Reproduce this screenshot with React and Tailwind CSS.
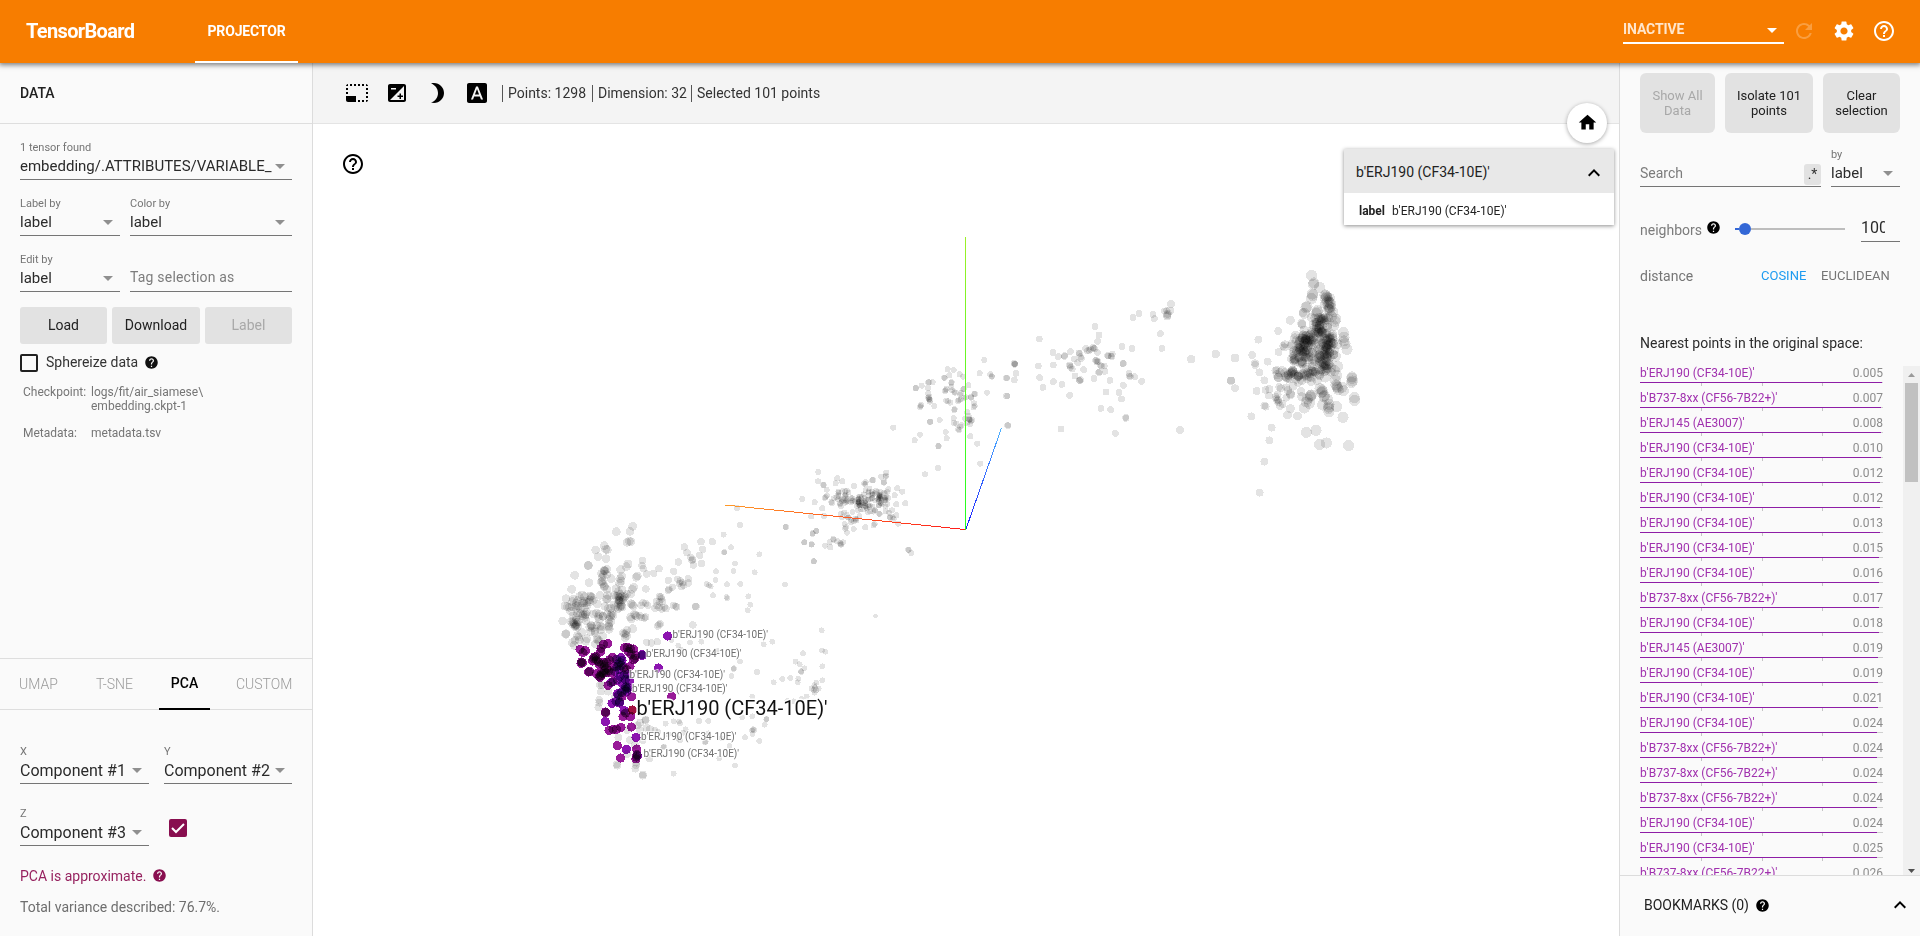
import React from "react";
import {
  MdPhotoSizeSelectSmall,
  MdExposure,
  MdBrightness3,
  MdFontDownload,
  MdHelpOutline,
  MdHelp,
  MdSettings,
  MdRefresh,
  MdHome,
  MdExpandLess,
} from "react-icons/md";

/* ---------- scatter data: flat x,y lists in thirds of a pixel, relative to an origin ---------- */

const LOWER_LEFT = [
  229,95, 278,79, 270,94, 261,127, 268,124, 273,125, 193,137, 167,150, 197,148, 202,149, 174,170, 198,176, 145,196, 145,197,
  104,226, 147,248, 192,211, 194,213, 190,224, 186,232, 187,243, 184,246, 214,236, 193,261, 201,268, 95,268, 264,192, 259,200,
  242,209, 308,182, 306,197, 310,206, 357,206, 341,220, 320,222, 292,228, 289,232, 245,228, 241,236, 243,243, 239,250, 318,267,
  277,268, 281,262, 272,282, 246,270, 228,266, 223,285, 234,288, 240,283, 247,290, 238,292, 229,290, 255,290, 240,300, 243,318,
  240,322, 246,321, 244,316, 234,326, 202,296, 200,298, 203,286, 153,290, 150,288, 155,293, 149,300, 160,301, 126,285, 134,290,
  100,298, 97,305, 113,302, 132,303, 82,320, 88,322, 75,318, 78,296, 121,326, 133,324, 139,308, 114,318, 277,314, 273,311,
  280,318, 309,308, 317,310, 323,316, 303,316, 286,346, 290,349, 283,343, 317,351, 313,354, 305,353, 300,347, 344,325, 350,305,
  359,290, 364,297, 359,306, 368,305, 351,317, 357,322, 373,322, 378,326, 365,327, 363,291, 407,319, 410,321, 400,316, 387,268,
  385,271, 397,262, 466,319, 468,320, 385,241, 413,238, 421,243, 427,248, 425,260, 418,250, 431,255, 445,236, 445,249, 401,214,
  415,186, 433,141, 441,158, 452,172, 456,181, 460,195, 458,178, 479,166, 488,148, 483,125, 517,125, 485,191, 357,374, 353,378,
  361,371, 459,375, 68,363, 78,401, 77,403, 104,374, 102,370, 107,378, 110,373, 98,372, 105,380, 112,366, 108,352, 99,348,
  122,341, 128,348, 137,343, 134,352, 113,340, 138,362, 178,343, 175,350, 177,357, 189,349, 213,345, 219,347, 211,350, 207,358,
  216,339, 154,376, 149,381, 156,384, 165,393, 152,395, 180,378, 184,381, 182,389, 205,378, 207,381, 208,388, 278,386, 261,391,
  258,400, 254,402, 260,407, 255,413, 112,407, 116,411, 118,420, 105,421, 174,420, 171,417, 178,424, 137,424, 103,436, 97,428,
  320,427, 334,429, 352,425, 140,416, 166,432, 188,408, 212,325, 222,315, 195,319, 172,312, 118,290, 140,336, 92,334, 125,397,
];
const LOWER_SPARSE = [
  600,75, 551,104, 573,142, 554,156, 552,158, 585,191, 528,214, 581,213, 644,217, 527,240, 500,252, 507,256, 512,259, 561,253,
  601,252, 519,286, 560,291, 562,295, 625,289, 631,314, 623,331, 658,163, 737,81, 818,102, 829,93, 793,127, 815,134, 822,184,
  735,254, 591,24, 845,391, 671,433, 697,425, 484,425, 450,428, 415,437, 423,449, 395,420, 530,452, 582,505, 581,507, 600,485,
  651,516, 789,460, 767,485, 779,493, 793,505, 783,514, 784,516, 846,452, 856,455, 847,499, 847,541, 829,548, 823,556, 825,562,
  821,570, 828,570, 824,578, 836,566, 815,566, 727,537, 751,534, 775,536, 773,547, 701,547, 637,590, 760,604, 742,603, 785,597,
  800,590, 680,657, 679,658, 674,674, 637,649, 607,652, 639,688, 636,692, 642,690, 638,702, 615,712, 658,723, 569,738, 575,528,
  477,663, 505,663, 520,640, 437,688, 401,664, 417,665, 420,670, 377,671, 316,659, 317,661, 300,668, 330,688, 345,690, 355,695,
  293,676, 320,684, 372,740, 370,742, 420,721, 416,716, 497,725, 495,727, 585,797, 538,775, 401,821, 467,707, 430,698, 505,700,
  545,715, 385,703, 328,775, 309,824, 308,827, 286,806, 288,796, 232,797, 230,793, 289,788, 180,555, 183,575, 178,600, 175,622,
  178,608, 205,575, 235,712, 262,762, 253,640, 270,720, 186,556, 200,640, 225,590, 300,690, 308,720, 262,690, 285,735,
];
const MIDDLE = [
  115,366, 114,394, 67,447, 104,457, 127,475, 94,499, 132,498, 18,531, 109,543, 98,550, 73,577, 95,583, 101,634, 135,587,
  151,592, 149,577, 161,569, 160,567, 172,574, 181,580, 184,583, 189,577, 182,584, 385,599, 394,609, 386,600, 167,400, 172,385,
  187,394, 130,404, 131,406, 140,419, 137,442, 134,444, 141,437, 156,459, 154,456, 319,368, 318,377, 317,380, 304,380, 279,390,
  277,391, 257,397, 252,401, 312,396, 311,398, 325,418, 352,415, 367,425, 344,436, 376,460, 349,463, 349,496, 341,508, 329,501,
  331,503, 299,492, 297,491, 327,488, 336,481, 338,502, 355,521, 284,522, 281,526, 256,532, 229,511, 213,516, 198,532, 196,536,
  201,548, 194,522, 221,537, 222,408, 317,484, 340,233, 404,271, 420,254, 435,373, 474,354, 475,288, 476,289, 500,265, 497,246,
  601,341, 592,281, 571,259, 535,238, 538,240, 541,230, 545,226, 450,216, 451,215, 479,210, 521,205, 522,219, 529,221, 555,206,
  568,209, 570,209, 567,207, 571,222, 577,210, 566,197, 562,187, 562,218, 573,214, 581,172, 584,168, 582,160, 523,180, 524,178,
  511,158, 499,152, 504,154, 463,168, 449,155, 447,148, 445,143, 448,140, 447,147, 450,150, 445,130, 423,165, 422,168, 420,172,
  408,114, 407,115, 425,107, 445,97, 447,97, 458,97, 444,114, 492,83, 494,84, 508,76, 521,60, 503,58, 539,73, 549,80,
  515,97, 514,99, 514,111, 497,121, 495,124, 516,121, 523,126, 526,128, 543,129, 540,134, 550,118, 551,117, 565,106, 553,144,
  558,142, 573,141, 574,143, 583,132, 585,132, 537,151, 534,153, 542,148, 621,128, 682,138, 684,226, 599,70, 613,30, 631,73,
  635,79, 636,80, 680,84, 499,117,
];
const RIGHT_SPARSE = [
  513,72, 510,92, 493,93, 500,92, 503,101, 502,105, 502,109, 459,103, 463,116, 417,101, 399,113, 481,161, 486,205, 574,238,
  647,222, 693,302, 540,450, 346,460, 183,447, 23,437, 20,348, 43,300, 20,294, 48,280, 43,250, 44,253, 118,177, 115,258,
  119,293, 129,322, 159,218, 175,230, 160,255, 160,305, 186,313, 209,346, 193,227, 194,229, 211,215, 223,237, 237,219, 239,221,
  244,236, 242,230, 233,248, 209,255, 212,262, 217,267, 210,258, 225,288, 238,301, 239,302, 242,299, 251,269, 282,296, 285,140,
  297,165, 293,184, 292,217, 257,205, 262,212, 267,212, 279,203, 281,205, 284,206, 272,208, 287,242, 289,241, 294,244, 291,246,
  301,256, 305,258, 313,258, 298,276, 296,278, 315,274, 323,227, 325,228, 337,222, 335,230, 333,228, 366,200, 396,206, 369,250,
  370,251, 387,281, 388,288, 391,290, 404,290, 425,304, 330,301, 370,316, 318,336, 357,338, 365,357, 303,385, 332,389, 377,412,
  378,415,
];
const FAR_RIGHT = [
  275,76, 282,99, 281,103, 299,112, 277,132, 278,137, 275,146, 318,137, 320,141, 315,135, 316,146, 322,156, 328,158, 332,160,
  325,165, 329,172, 326,178, 330,182, 261,170, 258,173, 249,187, 253,190, 211,211, 175,243, 115,269, 97,315, 105,340, 106,345,
  143,335, 118,367, 133,391, 33,392, 45,415, 110,423, 133,467, 137,470, 94,499, 155,533, 148,571, 133,635, 119,728, 232,498,
  203,495, 211,476, 259,547, 288,541, 299,583, 319,579, 386,587, 369,502, 327,486, 326,475, 350,470, 403,443, 404,451, 396,381,
  397,393, 395,397, 396,385, 353,349, 343,361, 370,248, 372,273, 375,281, 381,298, 372,262, 345,214, 340,228, 347,207, 335,200,
  292,186, 289,191, 292,182, 245,220, 246,223, 227,255, 190,288, 193,292, 176,306, 195,283, 166,362, 170,360, 148,417, 137,420,
  147,437, 178,411, 183,415, 173,433, 175,450, 172,452, 170,447, 176,457, 167,441, 188,462, 180,468, 199,412, 211,431, 212,434,
  199,443, 204,421, 243,425, 245,440, 272,437, 271,441, 274,435, 262,447, 259,456, 253,474, 268,460, 306,420, 308,424, 305,428,
  300,416, 312,440, 323,448, 327,463, 308,465, 351,409, 352,413, 348,405, 355,419, 370,422, 350,376, 347,391, 316,381, 366,412,
  313,437, 326,471, 235,397, 219,408, 339,186, 346,319, 351,282,
];

/* x, y, tone: 0 magenta, 1 violet, 2 hovered */
const PICKED = [
  203,431,0, 190,433,0, 183,445,0, 182,455,0, 120,448,0, 136,452,0, 129,458,0, 124,486,0, 123,490,0, 127,488,0, 148,514,0,
  146,516,0, 160,475,0, 163,471,0, 170,480,0, 175,485,0, 158,483,0, 185,492,0, 192,488,0, 178,494,0, 200,487,0, 208,480,0,
  218,472,0, 200,505,0, 193,512,0, 190,520,0, 183,527,0, 178,529,0, 185,519,0, 170,521,0, 206,511,0, 180,532,0, 213,519,0,
  222,500,0, 230,478,1, 243,473,1, 240,487,1, 235,492,1, 244,496,1, 231,500,1, 250,503,0, 238,508,1, 224,514,1, 259,508,0,
  270,499,0, 254,443,0, 262,442,0, 271,446,0, 280,447,0, 266,455,0, 273,463,0, 287,467,0, 284,475,0, 280,479,0, 306,464,1,
  307,466,1, 383,408,1, 355,504,1, 395,590,0, 240,529,1, 252,526,1, 262,522,1, 256,538,1, 268,542,1, 232,540,1, 219,545,0,
  213,548,1, 204,556,0, 248,552,1, 257,561,1, 261,566,1, 255,569,1, 260,574,1, 264,563,1, 245,577,1, 233,581,1, 236,585,1,
  246,590,0, 275,590,0, 228,604,1, 239,606,1, 216,610,1, 238,609,1, 197,638,0, 196,636,0, 196,665,1, 252,631,1, 257,639,0,
  249,650,0, 272,650,0, 274,681,0, 243,682,0, 229,688,0, 219,688,0, 207,691,0, 288,712,1, 232,737,0, 259,748,1, 290,747,0,
  291,763,0, 292,767,1, 289,771,0, 288,777,0, 242,774,0, 277,630,2, 198,519,0, 168,470,0, 246,481,1, 194,498,0,
];

/* dense cores: centre x, centre y, spread x, spread y, count, origin index */
const CORES = [
  [299, 222, 18, 20, 40, 1],
  [322, 268, 14, 14, 22, 1],
  [262, 272, 13, 12, 22, 1],
  [278, 300, 38, 38, 110, 1],
  [320, 316, 14, 13, 14, 1],
  [268, 374, 26, 12, 30, 1],
  [322, 350, 11, 12, 10, 1],
  [230, 305, 14, 22, 18, 1],
  [205, 370, 22, 13, 20, 1],
  [325, 160, 7, 16, 7, 1],
  [236, 453, 14, 8, 24, 0],
  [284, 436, 16, 10, 20, 0],
  [185, 440, 14, 14, 22, 0],
  [308, 450, 10, 13, 18, 0],
  [262, 474, 14, 9, 14, 0],
  [216, 490, 20, 14, 14, 0],
  [245, 445, 50, 26, 26, 0],
  [238, 292, 14, 18, 10, 2],
  [104, 372, 8, 8, 5, 2],
  [190, 230, 9, 20, 6, 2],
  [140, 305, 30, 24, 12, 2],
  [190, 365, 50, 28, 14, 2],
];
const ORIGINS = [
  { x: 780, y: 350, r: 2.9 },
  { x: 1220, y: 250, r: 4.7 },
  { x: 540, y: 500, r: 4.3 },
];

function makeRandom(seed) {
  let a = seed;
  return () => {
    a = (a + 0x6d2b79f5) | 0;
    let t = Math.imul(a ^ (a >>> 15), 1 | a);
    t = (t + Math.imul(t ^ (t >>> 7), 61 | t)) ^ t;
    return ((t ^ (t >>> 14)) >>> 0) / 4294967296;
  };
}

function corePoints() {
  const rnd = makeRandom(41);
  const out = [];
  for (const [cx, cy, sx, sy, n, o] of CORES) {
    const { x, y, r } = ORIGINS[o];
    for (let i = 0; i < n; i++) {
      const a = rnd() * Math.PI * 2;
      const d = Math.min(1.7, Math.sqrt(-2 * Math.log(1 - rnd() * 0.9)));
      out.push([x + (cx + Math.cos(a) * d * sx) / 3, y + (cy + Math.sin(a) * d * sy) / 3, r]);
    }
  }
  return out;
}

function place(list, ox, oy, r) {
  const out = [];
  for (let i = 0; i < list.length; i += 2) {
    const radius = typeof r === "function" ? r(list[i], list[i + 1]) : r;
    out.push([ox + list[i] / 3, oy + list[i + 1] / 3, radius]);
  }
  return out;
}

const GREY = [
  ...place(LOWER_LEFT, 540, 500, (x) => (x < 300 ? 4.4 : 3.7)),
  ...place(LOWER_SPARSE, 540, 500, (x) => (x < 340 ? 3.9 : 2.9)),
  ...place(MIDDLE, 780, 350, 3),
  ...place(RIGHT_SPARSE, 1000, 280, (x) => (x > 500 ? 4.1 : 3.4)),
  ...place(FAR_RIGHT, 1220, 250, (x) => (x < 200 ? 3.9 : x < 250 ? 4.5 : 5.6)),
  [1014.7, 363.7, 3],
  [1015, 364.3, 3],
  [875.5, 616, 2.2],
  [1235, 358, 4.5],
  ...corePoints(),
];

const TONES = ["#981a98", "#8c14b0", "#a01040"];
const NAME = "b'ERJ190 (CF34-10E)'";
const TAGS = [
  [672.5, 638],
  [646, 657],
  [629.5, 678],
  [632, 692],
  [641, 740],
  [643.5, 757],
];

function Scatter() {
  return (
    <svg width="1306" height="812" viewBox="313 124 1306 812" className="block" fontFamily="Roboto, sans-serif">
      <defs>
        <linearGradient id="ax" gradientUnits="userSpaceOnUse" x1="966" y1="529" x2="725" y2="505">
          <stop offset="0" stopColor="#ff1a1a" />
          <stop offset="1" stopColor="#ff9a28" />
        </linearGradient>
        <linearGradient id="ay" gradientUnits="userSpaceOnUse" x1="965" y1="529" x2="965" y2="237">
          <stop offset="0" stopColor="#1fff1f" />
          <stop offset="1" stopColor="#9cf028" />
        </linearGradient>
        <linearGradient id="az" gradientUnits="userSpaceOnUse" x1="966" y1="529" x2="1001" y2="428">
          <stop offset="0" stopColor="#1a1aff" />
          <stop offset="1" stopColor="#4fb4ff" />
        </linearGradient>
      </defs>
      <g fill="#000" fillOpacity="0.11" shapeRendering="crispEdges">
        {GREY.map(([x, y, r], i) => (
          <circle key={i} cx={x} cy={y} r={r} />
        ))}
      </g>
      <g shapeRendering="crispEdges">
        {Array.from({ length: PICKED.length / 3 }, (_, i) => (
          <circle
            key={i}
            cx={540 + PICKED[i * 3] / 3}
            cy={500 + PICKED[i * 3 + 1] / 3}
            r="4.6"
            fill={TONES[PICKED[i * 3 + 2]]}
            className="mix-blend-multiply"
          />
        ))}
      </g>
      <g strokeWidth="1" shapeRendering="crispEdges">
        <line x1="725" y1="505" x2="966" y2="529.6" stroke="url(#ax)" />
        <rect x="965" y="237" width="1" height="293" fill="url(#ay)" />
        <line x1="966" y1="529" x2="1001.5" y2="428" stroke="url(#az)" />
      </g>
      <g fontSize="10" fill="#707070" stroke="#fff" strokeOpacity="0.75" strokeWidth="2" paintOrder="stroke">
        {TAGS.map(([x, y]) => (
          <text key={y} x={x} y={y}>{NAME}</text>
        ))}
      </g>
      <text x="636.5" y="715" fontSize="20" fill="#111" stroke="#fff" strokeWidth="3" paintOrder="stroke">
        {NAME}
      </text>
    </svg>
  );
}

/* ---------- form pieces ---------- */

function Caret({ className = "text-[#8f8f8f]" }) {
  return (
    <svg width="10" height="5" viewBox="0 0 10 5" className={"shrink-0 " + className}>
      <path d="M0 0h10L5 5z" fill="currentColor" />
    </svg>
  );
}

function Field({ label, value, className, size = "text-[15px]" }) {
  return (
    <div className={"h-[41px] border-b border-[#757575] " + className}>
      <div className="h-4 text-[11px] leading-[18px] text-[#757575]">{label}</div>
      <div className="flex h-[23px] items-center pr-[7px]">
        <span className={"min-w-0 flex-1 leading-[23px] whitespace-nowrap text-[#2b2b2b] " + size}>{value}</span>
        <Caret />
      </div>
    </div>
  );
}

function GreyButton({ children, disabled, className }) {
  return (
    <button className={"flex items-center justify-center bg-[#e2e2e2] " + (disabled ? "text-[#a8a8a8] " : "text-[#212121] ") + className}>
      {children}
    </button>
  );
}

function Header() {
  return (
    <header className="relative z-10 flex h-[63px] shrink-0 bg-[#f77d00] text-white shadow-[0_1px_5px_1px_rgba(0,0,0,0.5)]">
      <div className="flex w-[195px] items-center pb-0.5 pl-[26px] text-[20px] font-bold tracking-[-0.65px]">TensorBoard</div>
      <div className="flex w-[103px] items-center justify-center border-b-2 border-white pt-0.5 text-[14px] font-bold tracking-[-0.15px]">PROJECTOR</div>
      <div className="flex-1" />
      <div className="mt-[16px] mr-[8px] flex h-[28px] w-[161px] items-center justify-between border-b-2 border-white pr-[7px] text-[14px] font-bold tracking-[-0.1px]">
        <span className="text-[#ffe6cc]">INACTIVE</span>
        <Caret className="mt-[3px] text-white" />
      </div>
      <div className="flex items-center gap-4 pr-6 pb-px">
        <MdRefresh size={24} className="opacity-25" />
        <MdSettings size={24} />
        <MdHelpOutline size={24} />
      </div>
    </header>
  );
}

function DataPanel() {
  return (
    <aside className="flex w-[313px] shrink-0 flex-col border-r border-[#dcdcdc] bg-[#fafafa]">
      <div className="flex h-[61px] items-center border-b border-[#dedede] pl-5 text-[14px] font-medium text-[#212121]">DATA</div>
      <div className="flex flex-1 flex-col px-5 pt-[15px]">
        <Field label="1 tensor found" value="embedding/.ATTRIBUTES/VARIABLE_" className="w-[272px]" />
        <div className="mt-[15px] flex gap-[10px]">
          <Field label="Label by" value="label" className="w-[100px]" />
          <Field label="Color by" value="label" className="w-[162px]" />
        </div>
        <div className="mt-[15px] flex gap-[10px]">
          <Field label="Edit by" value="label" className="w-[100px]" />
          <div className="flex h-[41px] w-[162px] items-end border-b border-[#757575] pb-[4px] text-[14px] leading-[20px] tracking-[0.2px] text-[#7c7c7c]">Tag selection as</div>
        </div>
        <div className="mt-[15px] flex gap-[5px] text-[14px]">
          <GreyButton className="h-[37px] w-[87px] rounded-[3px]">Load</GreyButton>
          <GreyButton className="h-[37px] w-[88px] rounded-[3px]">Download</GreyButton>
          <GreyButton disabled className="h-[37px] w-[87px] rounded-[3px]">Label</GreyButton>
        </div>
        <div className="mt-[10px] flex h-[18px] items-center">
          <span className="h-[18px] w-[18px] rounded-[2px] border-2 border-[#212121]" />
          <span className="ml-2 pb-px text-[14px] text-[#333]">Sphereize data</span>
          <MdHelp size={15} className="mb-[2px] ml-[6px] text-[#111]" />
        </div>
        <div className="mt-[13px] ml-[3px] grid grid-cols-[68px_1fr] gap-y-[13px] text-[12px] leading-[14px] text-[#757575]">
          <span>Checkpoint:</span>
          <span>logs/fit/air_siamese\<br />embedding.ckpt-1</span>
          <span>Metadata:</span>
          <span>metadata.tsv</span>
        </div>
      </div>
      <div className="h-[278px] shrink-0 border-t border-[#dedede]">
        <div className="flex h-[51px] items-center border-b border-[#dedede] text-[14px] font-light text-[#9a9a9a]">
          <span className="w-[77px] pl-[19px]">UMAP</span>
          <span className="w-[82px] pl-[19px]">T-SNE</span>
          <span className="-mb-px flex h-[51px] w-[51px] items-center justify-center border-b-2 border-black pb-px font-medium text-black">PCA</span>
          <span className="flex-1 pl-[26px]">CUSTOM</span>
        </div>
        <div className="px-5 pt-[33px]">
          <div className="flex gap-[15px]">
            <Field label="X" value="Component #1" size="text-[16px]" className="w-[129px]" />
            <Field label="Y" value="Component #2" size="text-[16px]" className="w-[128px]" />
          </div>
          <div className="mt-[21px] flex items-center gap-5">
            <Field label="Z" value="Component #3" size="text-[16px]" className="w-[129px]" />
            <span className="mt-[5px] flex h-[18px] w-[18px] items-center justify-center rounded-[2px] bg-[#880e4f]">
              <svg width="14" height="11" viewBox="0 0 14 11" fill="none" stroke="#fff" strokeWidth="2">
                <path d="M1 5l4 4 8-8" />
              </svg>
            </span>
          </div>
          <div className="mt-[21px] flex h-[18px] items-center text-[14px] text-[#96225f]">
            PCA is approximate.
            <MdHelp size={15} className="mb-px ml-[6px] text-[#880e4f]" />
          </div>
          <div className="mt-[13px] h-[18px] text-[14px] leading-[18px] text-[#6e6e6e]">Total variance described: 76.7%.</div>
        </div>
      </div>
    </aside>
  );
}

function Canvas() {
  return (
    <main className="relative flex w-[1306px] shrink-0 flex-col bg-white">
      <div className="flex h-[61px] items-center border-b border-[#e4e4e4] bg-[#f4f4f4] pl-[32px] text-[14px] text-[#333]">
        <div className="flex gap-4 text-black">
          <MdPhotoSizeSelectSmall size={24} />
          <MdExposure size={24} />
          <MdBrightness3 size={24} />
          <MdFontDownload size={24} />
        </div>
        <div className="ml-[13px] flex leading-[17px]">
          <span className="w-[90px] border-l border-[#555] pl-[5px]">Points: 1298</span>
          <span className="w-[99px] border-l border-[#555] pl-[5px]">Dimension: 32</span>
          <span className="border-l border-[#555] pl-[5px]">Selected 101 points</span>
        </div>
      </div>
      <Scatter />
      <MdHelpOutline size={24} className="absolute top-[89px] left-[28px] text-black" />
      <div className="absolute top-[40px] right-[12px] flex h-10 w-10 items-center justify-center rounded-full bg-white shadow-[0_1px_4px_rgba(0,0,0,0.35)]">
        <MdHome size={21} className="mb-px text-black" />
      </div>
      <div className="absolute top-[86px] right-[5px] w-[270px] bg-white shadow-[0_1px_4px_rgba(0,0,0,0.45)]">
        <div className="flex h-[44px] items-center justify-between bg-[#e8e8e8] pt-[3px] pr-[8px] pl-3 text-[14px] text-[#222]">
          {NAME}
          <MdExpandLess size={24} className="text-black" />
        </div>
        <div className="flex h-[32px] items-center gap-[7px] pt-[4px] pl-[15px] text-[12px] text-[#222]">
          <span className="font-bold">label</span>
          <span>{NAME}</span>
        </div>
      </div>
    </main>
  );
}

const E190 = NAME;
const B737 = "b'B737-8xx (CF56-7B22+)'";
const E145 = "b'ERJ145 (AE3007)'";
const NEIGHBORS = [
  [E190, "0.005"], [B737, "0.007"], [E145, "0.008"], [E190, "0.010"], [E190, "0.012"], [E190, "0.012"], [E190, "0.013"],
  [E190, "0.015"], [E190, "0.016"], [B737, "0.017"], [E190, "0.018"], [E145, "0.019"], [E190, "0.019"], [E190, "0.021"],
  [E190, "0.024"], [B737, "0.024"], [B737, "0.024"], [B737, "0.024"], [E190, "0.024"], [E190, "0.025"], [B737, "0.026"],
];

function Neighbor({ name, distance }) {
  return (
    <div className="h-[25px] w-[243px]">
      <div className="flex h-[16px] items-start justify-between text-[12px] leading-[14px] text-[#a030ae]">
        <span>{name}</span>
        <span className="text-[#8c8c8c]">{distance}</span>
      </div>
      <div className="flex h-px bg-[#d0d0d0]">
        <span className="h-px bg-[#8e1da6]" style={{ width: 243 * (1 - Number(distance)) }} />
      </div>
      <div className="flex h-[3px]">
        <span className="w-[62px] border-r border-[#c4c4c4]" />
        <span className="w-[61px] border-r border-[#c4c4c4]" />
        <span className="w-[60px] border-r border-[#c4c4c4]" />
      </div>
    </div>
  );
}

function Inspector() {
  return (
    <aside className="flex min-w-0 flex-1 flex-col border-l border-[#dcdcdc] bg-[#fafafa]">
      <div className="flex gap-[10px] pt-[10px] pl-5 text-[13px] leading-[15px]">
        <GreyButton disabled className="h-[60px] w-[75px] rounded-md px-2">Show All Data</GreyButton>
        <GreyButton className="h-[60px] w-[88px] rounded-md px-2">Isolate 101 points</GreyButton>
        <GreyButton className="h-[60px] w-[77px] rounded-md px-2">Clear selection</GreyButton>
      </div>
      <div className="mt-[13px] flex gap-[10px] pl-5">
        <div className="flex h-[41px] w-[181px] items-end justify-between border-b border-[#757575]">
          <span className="pb-[4px] text-[14px] leading-[18px] text-[#7c7c7c]">Search</span>
          <span className="mb-px flex h-[21px] w-[17px] items-center justify-center rounded-[3px] bg-[#e2e2e2] text-[14px] text-[#333]">.*</span>
        </div>
        <Field label="by" value="label" className="w-[69px]" />
      </div>
      <div className="mt-[25px] flex h-[30px] pl-5 text-[#7c7c7c]">
        <span className="mt-[9px] h-[18px] w-[66px] text-[14px] leading-[18px]">neighbors</span>
        <MdHelp size={15} className="mt-[8px] text-black" />
        <div className="mt-[11px] ml-[14px] flex h-3 w-[110px] items-center">
          <span className="h-[2px] w-1 bg-[#3367d6]" />
          <span className="h-3 w-3 rounded-full bg-[#3367d6]" />
          <span className="h-[2px] flex-1 bg-[#bdbdbd]" />
        </div>
        <div className="ml-4 h-[30px] w-[39px] border-b border-[#757575]">
          <div className="mt-[6px] w-6 overflow-hidden text-[16px] leading-5 text-[#2b2b2b]">100</div>
        </div>
      </div>
      <div className="mt-[23px] flex h-[22px] items-center pl-5 text-[14px] text-[#757575]">
        <span className="w-[121px]">distance</span>
        <span className="w-[60px] text-[13px] text-[#1d9bf0]">COSINE</span>
        <span className="text-[13px] tracking-[0.05px]">EUCLIDEAN</span>
      </div>
      <div className="mt-[47px] h-[18px] pl-5 text-[14px] leading-[18px] text-[#2b2b2b]">Nearest points in the original space:</div>
      <div className="mt-[14px] flex min-h-0 flex-1 overflow-hidden">
        <div className="min-w-0 flex-1 overflow-hidden pl-5">
          {NEIGHBORS.map(([name, distance], i) => (
            <Neighbor key={i} name={name} distance={distance} />
          ))}
        </div>
        <div className="flex w-[17px] flex-col items-center bg-[#f0f0f0]">
          <span className="flex h-[17px] items-center text-[#9a9a9a]">
            <svg width="7" height="4" viewBox="0 0 7 4"><path d="M0 4h7L3.500 0z" fill="currentColor" /></svg>
          </span>
          <span className="h-[99px] w-[13px] bg-[#c1c1c1]" />
          <span className="mt-auto flex h-[6px] items-start text-[#505050]">
            <svg width="7" height="4" viewBox="0 0 7 4"><path d="M0 0h7L3.500 4z" fill="currentColor" /></svg>
          </span>
        </div>
      </div>
      <div className="flex h-[61px] shrink-0 items-center border-t border-[#dcdcdc] pr-2 pb-[2px] pl-6 text-[14px] text-[#222]">
        BOOKMARKS (0)
        <MdHelp size={15} className="ml-[6px] text-black" />
        <MdExpandLess size={24} className="ml-auto text-black" />
      </div>
    </aside>
  );
}

export default function App() {
  return (
    <div className="flex h-[936px] w-[1920px] flex-col overflow-hidden bg-white font-['Roboto',sans-serif]">
      <Header />
      <div className="flex min-h-0 flex-1">
        <DataPanel />
        <Canvas />
        <Inspector />
      </div>
    </div>
  );
}
